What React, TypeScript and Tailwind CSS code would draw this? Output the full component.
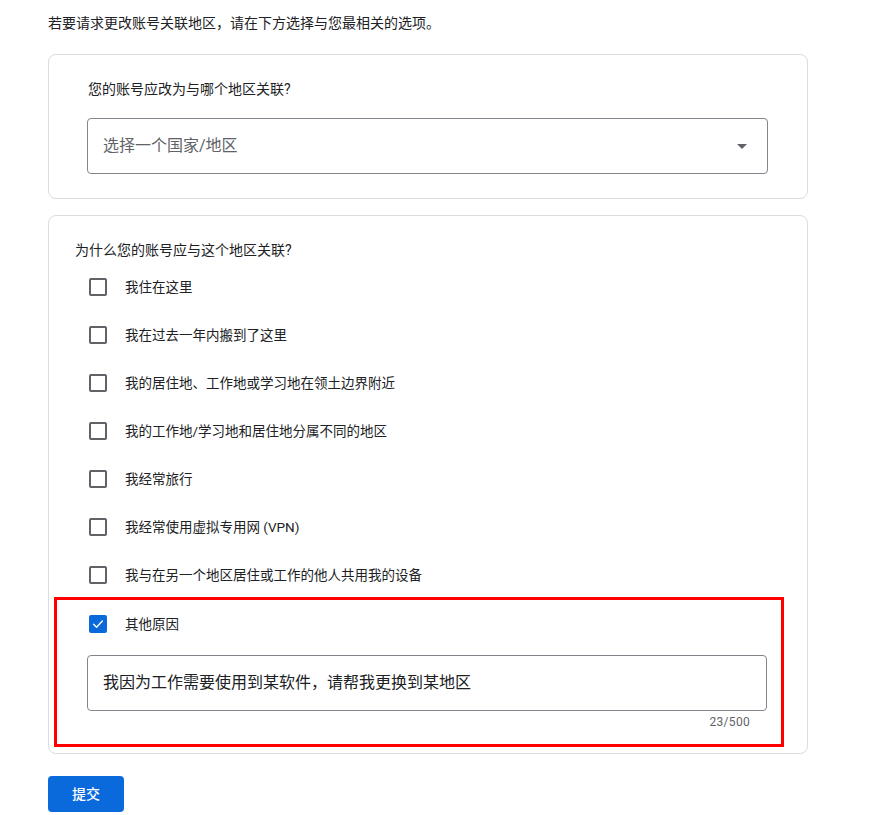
import { useState } from "react";

const reasons = [
  "我住在这里",
  "我在过去一年内搬到了这里",
  "我的居住地、工作地或学习地在领土边界附近",
  "我的工作地/学习地和居住地分属不同的地区",
  "我经常旅行",
  "我经常使用虚拟专用网 (VPN)",
  "我与在另一个地区居住或工作的他人共用我的设备",
];

const font = "font-['Roboto','Noto_Sans_CJK_SC',sans-serif]";

function Checkbox({ checked }: { checked: boolean }) {
  if (checked) {
    return (
      <span className="w-[18px] h-[18px] rounded-[2px] bg-[#0b6adb] flex items-center justify-center">
        <svg width="14" height="14" viewBox="0 0 24 24" fill="none">
          <path d="M4.5 12.5l5 5L19.5 7" stroke="white" strokeWidth="2.3" strokeLinecap="round" strokeLinejoin="round" />
        </svg>
      </span>
    );
  }
  return <span className="w-[18px] h-[18px] rounded-[2px] border-2 border-[#5f6368]" />;
}

function Row({ label, checked }: { label: string; checked: boolean }) {
  return (
    <div className="h-12 flex items-center gap-[18px]">
      <Checkbox checked={checked} />
      <span className="text-[13.5px] text-[#202124]">{label}</span>
    </div>
  );
}

export default function App() {
  const [text] = useState("我因为工作需要使用到某软件，请帮我更换到某地区");

  return (
    <div className={`w-[890px] min-h-[815px] bg-white ${font} text-[#202124]`}>
      <div className="pl-12 pt-[13px] w-[808px]">
        <p className="text-sm leading-5">若要请求更改账号关联地区，请在下方选择与您最相关的选项。</p>

        <div className="mt-[21px] border border-[#dadce0] rounded-lg pt-6 pb-6 pl-[38px] pr-[39px]">
          <p className="pl-px text-sm leading-5">您的账号应改为与哪个地区关联?</p>
          <div className="mt-[19px] h-14 border border-[#80868b] rounded flex items-center justify-between pl-[15px] pr-5">
            <span className="text-base text-[#5f6368]">选择一个国家/地区</span>
            <svg width="10" height="5" viewBox="0 0 10 5">
              <path d="M0 0h10L5 5z" fill="#5f6368" />
            </svg>
          </div>
        </div>

        <div className="mt-4 border border-[#dadce0] rounded-lg pt-6 pb-[6px]">
          <p className="pl-[26px] text-sm leading-5">为什么您的账号应与这个地区关联?</p>
          <div className="mt-[3px] pl-[40px]">
            {reasons.map((r) => (
              <Row key={r} label={r} checked={false} />
            ))}
          </div>
          <div className="-mt-[2px] ml-[5px] mr-[23px] border-[3px] border-[#ff0000] pl-[32px] pr-[14px] pb-[14px]">
            <Row label="其他原因" checked={true} />
            <div className="-ml-[2px] mt-[7px] w-[680px] h-14 border border-[#80868b] rounded flex items-center pl-[15px]">
              <span className="text-base">{text}</span>
            </div>
            <div className="w-[661px] mt-[3px] text-right text-xs leading-4 tracking-[0.3px] text-[#5f6368]">{text.length}/500</div>
          </div>
        </div>

        <button className="mt-[22px] w-[76px] h-9 rounded bg-[#0b6adb] text-white text-sm font-medium">提交</button>
      </div>
    </div>
  );
}
